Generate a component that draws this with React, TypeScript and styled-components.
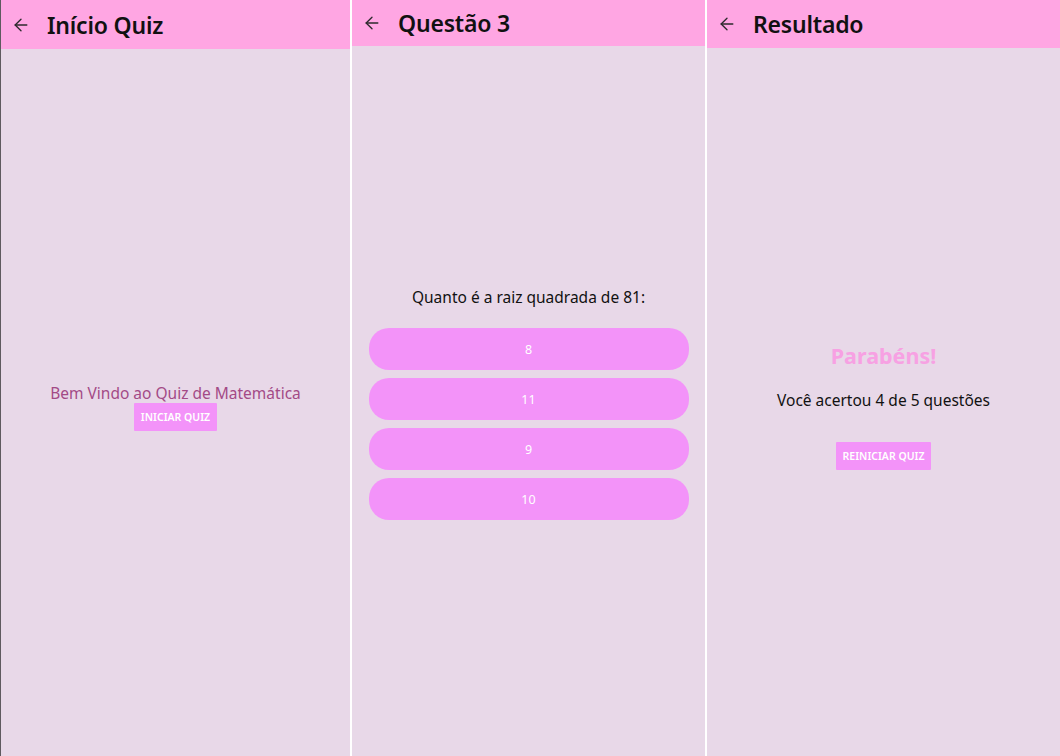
import React from "react";
import styled, { createGlobalStyle } from "styled-components";
import { ArrowLeft } from "lucide-react";

const Global = createGlobalStyle`
  html, body { margin: 0; padding: 0; background: #ffffff; }
  body { font-family: "Noto Sans", "Open Sans", sans-serif; }
  * { box-sizing: border-box; }
`;

const Page = styled.div`
  display: grid;
  grid-template-columns: 350px 353px 353px;
  column-gap: 2px;
  width: 1060px;
  height: 756px;
  background: #ffffff;
  overflow: hidden;
`;

const Screen = styled.section<{ $edge?: boolean }>`
  display: flex;
  flex-direction: column;
  height: 756px;
  background: #e8d8e8;
  border-left: ${(p) => (p.$edge ? "1px solid #5f5a5f" : "none")};
`;

const Header = styled.header<{ $h: number }>`
  display: flex;
  align-items: center;
  gap: 16px;
  height: ${(p) => p.$h}px;
  padding-left: 10px;
  background: #ffa6e3;
  flex-shrink: 0;
`;

const Back = styled.span`
  display: flex;
  align-items: center;
  color: #2c2a2c;
`;

const Title = styled.h1`
  margin: 0;
  font-size: 23px;
  font-weight: 600;
  color: #111;
  letter-spacing: -0.2px;
`;

const Body = styled.div<{ $shift?: number }>`
  flex: 1;
  display: flex;
  flex-direction: column;
  align-items: center;
  justify-content: center;
  padding-top: ${(p) => p.$shift ?? 0}px;
`;

const Welcome = styled.p`
  margin: 0;
  font-size: 15.5px;
  color: #a34a86;
  line-height: 20px;
`;

const SmallButton = styled.button<{ $mt: number }>`
  margin-top: ${(p) => p.$mt}px;
  border: none;
  border-radius: 1px;
  background: #f393f9;
  color: #ffffff;
  font-family: "Noto Sans", sans-serif;
  font-weight: 600;
  font-size: 10.5px;
  padding: 0 7px;
  height: 28px;
  cursor: pointer;
`;

const Question = styled.p`
  margin: 0 0 20px;
  font-size: 15.5px;
  color: #111;
`;

const Options = styled.div`
  display: flex;
  flex-direction: column;
  gap: 8px;
  width: 320px;
`;

const Option = styled.button`
  height: 42px;
  border: none;
  border-radius: 20px;
  background: #f393f9;
  color: #ffffff;
  font-family: "Noto Sans", sans-serif;
  font-size: 12.5px;
  cursor: pointer;
`;

const Congrats = styled.h2`
  margin: 0;
  font-size: 21.5px;
  font-weight: 700;
  color: #f7a1e3;
`;

const Score = styled.p`
  margin: 19px 0 0;
  font-size: 15.5px;
  color: #111;
`;

const App: React.FC = () => {
  const options = ["8", "11", "9", "10"];
  return (
    <>
      <Global />
      <Page>
        <Screen $edge>
          <Header $h={49}>
            <Back>
              <ArrowLeft size={20} strokeWidth={1.6} />
            </Back>
            <Title>Início Quiz</Title>
          </Header>
          <Body $shift={8}>
            <Welcome>Bem Vindo ao Quiz de Matemática</Welcome>
            <SmallButton $mt={0}>INICIAR QUIZ</SmallButton>
          </Body>
        </Screen>
        <Screen>
          <Header $h={46}>
            <Back>
              <ArrowLeft size={20} strokeWidth={1.6} />
            </Back>
            <Title>Questão 3</Title>
          </Header>
          <Body $shift={4}>
            <Question>Quanto é a raiz quadrada de 81:</Question>
            <Options>
              {options.map((o) => (
                <Option key={o}>{o}</Option>
              ))}
            </Options>
          </Body>
        </Screen>
        <Screen>
          <Header $h={48}>
            <Back>
              <ArrowLeft size={20} strokeWidth={1.6} />
            </Back>
            <Title>Resultado</Title>
          </Header>
          <Body $shift={7}>
            <Congrats>Parabéns!</Congrats>
            <Score>Você acertou 4 de 5 questões</Score>
            <SmallButton $mt={31}>REINICIAR QUIZ</SmallButton>
          </Body>
        </Screen>
      </Page>
    </>
  );
};

export default App;
